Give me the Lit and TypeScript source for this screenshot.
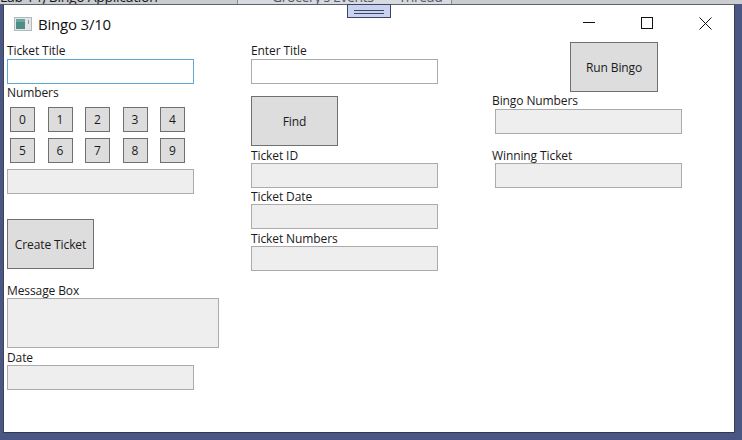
import { LitElement, css, html, svg } from "lit";
import { customElement } from "lit/decorators.js";

@customElement("app-root")
export class AppRoot extends LitElement {
  static styles = css`
    :host {
      display: block;
      width: 742px;
      height: 440px;
      overflow: hidden;
      background: #4a5684;
      font-family: "Open Sans", "Noto Sans", "Liberation Sans", sans-serif;
      font-size: 12px;
      letter-spacing: -0.1px;
      color: #1a1a1a;
    }
    .strip {
      height: 4px;
      display: flex;
      align-items: flex-end;
      background: #c9ccd0;
      overflow: hidden;
      white-space: nowrap;
      font-size: 14px;
      line-height: 18px;
    }
    .strip-title {
      width: 237px;
      flex: none;
      margin-bottom: -2px;
      letter-spacing: -0.3px;
    }
    .strip-tabs {
      width: 215px;
      flex: none;
      height: 4px;
      display: flex;
      align-items: flex-end;
      gap: 25px;
      padding-left: 34px;
      box-sizing: border-box;
      letter-spacing: -0.4px;
      background: #d7dae0;
      border-left: 1px solid #8a8d94;
      border-right: 1px solid #8a8d94;
      color: #55585f;
    }
    .strip-tabs span {
      margin-bottom: -2px;
    }
    .window {
      position: relative;
      width: 732px;
      height: 429px;
      margin-left: 3px;
      box-sizing: border-box;
      background: #fff;
      border-top: 1px solid #5e6268;
      border-left: 1px solid #3d4555;
      border-right: 1px solid #3a4050;
      border-bottom: 1px solid #33394a;
    }
    .grip {
      position: absolute;
      left: 343px;
      top: -1px;
      width: 44px;
      height: 14px;
      box-sizing: border-box;
      background: #c9d3f0;
      border: 1px solid #3c4565;
      display: flex;
      flex-direction: column;
      align-items: center;
      gap: 2px;
      padding-top: 5px;
    }
    .grip i {
      display: block;
      width: 30px;
      height: 1px;
      background: #3c4565;
    }
    .titlebar {
      height: 37px;
      display: flex;
      align-items: center;
      padding-left: 10px;
      box-sizing: border-box;
    }
    .titlebar svg {
      display: block;
      flex: none;
    }
    .title {
      margin-left: 6px;
      font-size: 15px;
      letter-spacing: -0.2px;
      color: #111;
    }
    .controls {
      margin-left: auto;
      display: flex;
      margin-right: 22px;
      gap: 46px;
    }
    .body {
      display: grid;
      grid-template-columns: 244px 241px 1fr;
      padding-left: 3px;
      align-items: start;
    }
    .col {
      display: flex;
      flex-direction: column;
      align-items: flex-start;
      padding-top: 1px;
    }
    .col.run {
      padding-top: 0;
    }
    label {
      display: block;
      height: 16px;
      line-height: 15px;
    }
    label.low {
      line-height: 17px;
    }
    label.short {
      height: 15px;
    }
    .field {
      width: 187px;
      height: 25px;
      box-sizing: border-box;
      border: 1px solid #ababab;
      background: #eeeeee;
    }
    .field.edit {
      background: #fff;
    }
    .field.focus {
      background: #fff;
      border-color: #5fa8d3;
    }
    .field.wide {
      width: 212px;
      height: 50px;
    }
    .btn {
      width: 87px;
      height: 50px;
      box-sizing: border-box;
      border: 1px solid #707070;
      background: #dddddd;
      display: flex;
      align-items: center;
      justify-content: center;
    }
    .btn.run-btn {
      width: 88px;
      margin-left: 78px;
    }
    .digits {
      display: grid;
      grid-template-columns: repeat(5, 25px);
      gap: 6px 12.5px;
      margin: 7px 0 6px 3px;
    }
    .digit {
      height: 25px;
      box-sizing: border-box;
      border: 1px solid #707070;
      background: #dddddd;
      display: flex;
      align-items: center;
      justify-content: center;
    }
    .create {
      margin-top: 25px;
    }
    .find {
      margin-top: 12px;
    }
    .mt1 {
      margin-top: 1px;
    }
    .mt2 {
      margin-top: 2px;
    }
    .mt13 {
      margin-top: 13px;
    }
    .mt14 {
      margin-top: 14px;
    }
    .inset {
      margin-left: 3px;
    }
  `;

  private windowIcon() {
    return html`<svg width="18" height="14" viewBox="0 0 18 14">
      ${svg`<rect x="0.5" y="0.5" width="17" height="13" fill="#e2e6e8" stroke="#b3babe" />
      <rect x="2" y="2" width="9" height="10" fill="#4d8f86" />
      <rect x="2" y="2" width="9" height="3" fill="#6ba79f" />
      <rect x="14" y="3" width="1" height="4" fill="#8d9aa0" />`}
    </svg>`;
  }

  private controls() {
    return html`<div class="controls">
      <svg width="12" height="12" viewBox="0 0 12 12">
        ${svg`<path d="M0 5.5H12" stroke="#111" fill="none" />`}
      </svg>
      <svg width="12" height="12" viewBox="0 0 12 12">
        ${svg`<rect x="0.5" y="0.5" width="11" height="11" stroke="#111" fill="none" />`}
      </svg>
      <svg width="13" height="13" viewBox="0 0 13 13">
        ${svg`<path d="M0.5 0.5L12.5 12.5M12.5 0.5L0.5 12.5" stroke="#111" fill="none" />`}
      </svg>
    </div>`;
  }

  render() {
    return html`
      <div class="strip">
        <div class="strip-title">Lab 14) Bingo Application</div>
        <div class="strip-tabs"><span>Grocery's Events</span><span>Thread</span></div>
      </div>
      <div class="window">
        <div class="grip"><i></i><i></i></div>
        <div class="titlebar">
          ${this.windowIcon()}
          <span class="title">Bingo 3/10</span>
          ${this.controls()}
        </div>
        <div class="body">
          <div class="col">
            <label>Ticket Title</label>
            <div class="field focus"></div>
            <label class="low">Numbers</label>
            <div class="digits">
              ${[0, 1, 2, 3, 4, 5, 6, 7, 8, 9].map((n) => html`<div class="digit">${n}</div>`)}
            </div>
            <div class="field"></div>
            <div class="btn create">Create Ticket</div>
            <label class="mt14 short">Message Box</label>
            <div class="field wide"></div>
            <label class="mt2 short">Date</label>
            <div class="field"></div>
          </div>
          <div class="col">
            <label>Enter Title</label>
            <div class="field edit"></div>
            <div class="btn find">Find</div>
            <label class="mt1 low">Ticket ID</label>
            <div class="field"></div>
            <label class="low">Ticket Date</label>
            <div class="field"></div>
            <label class="mt1 low">Ticket Numbers</label>
            <div class="field"></div>
          </div>
          <div class="col run">
            <div class="btn run-btn">Run Bingo</div>
            <label class="low">Bingo Numbers</label>
            <div class="field inset mt1"></div>
            <label class="mt13 low">Winning Ticket</label>
            <div class="field inset"></div>
          </div>
        </div>
      </div>
    `;
  }
}
